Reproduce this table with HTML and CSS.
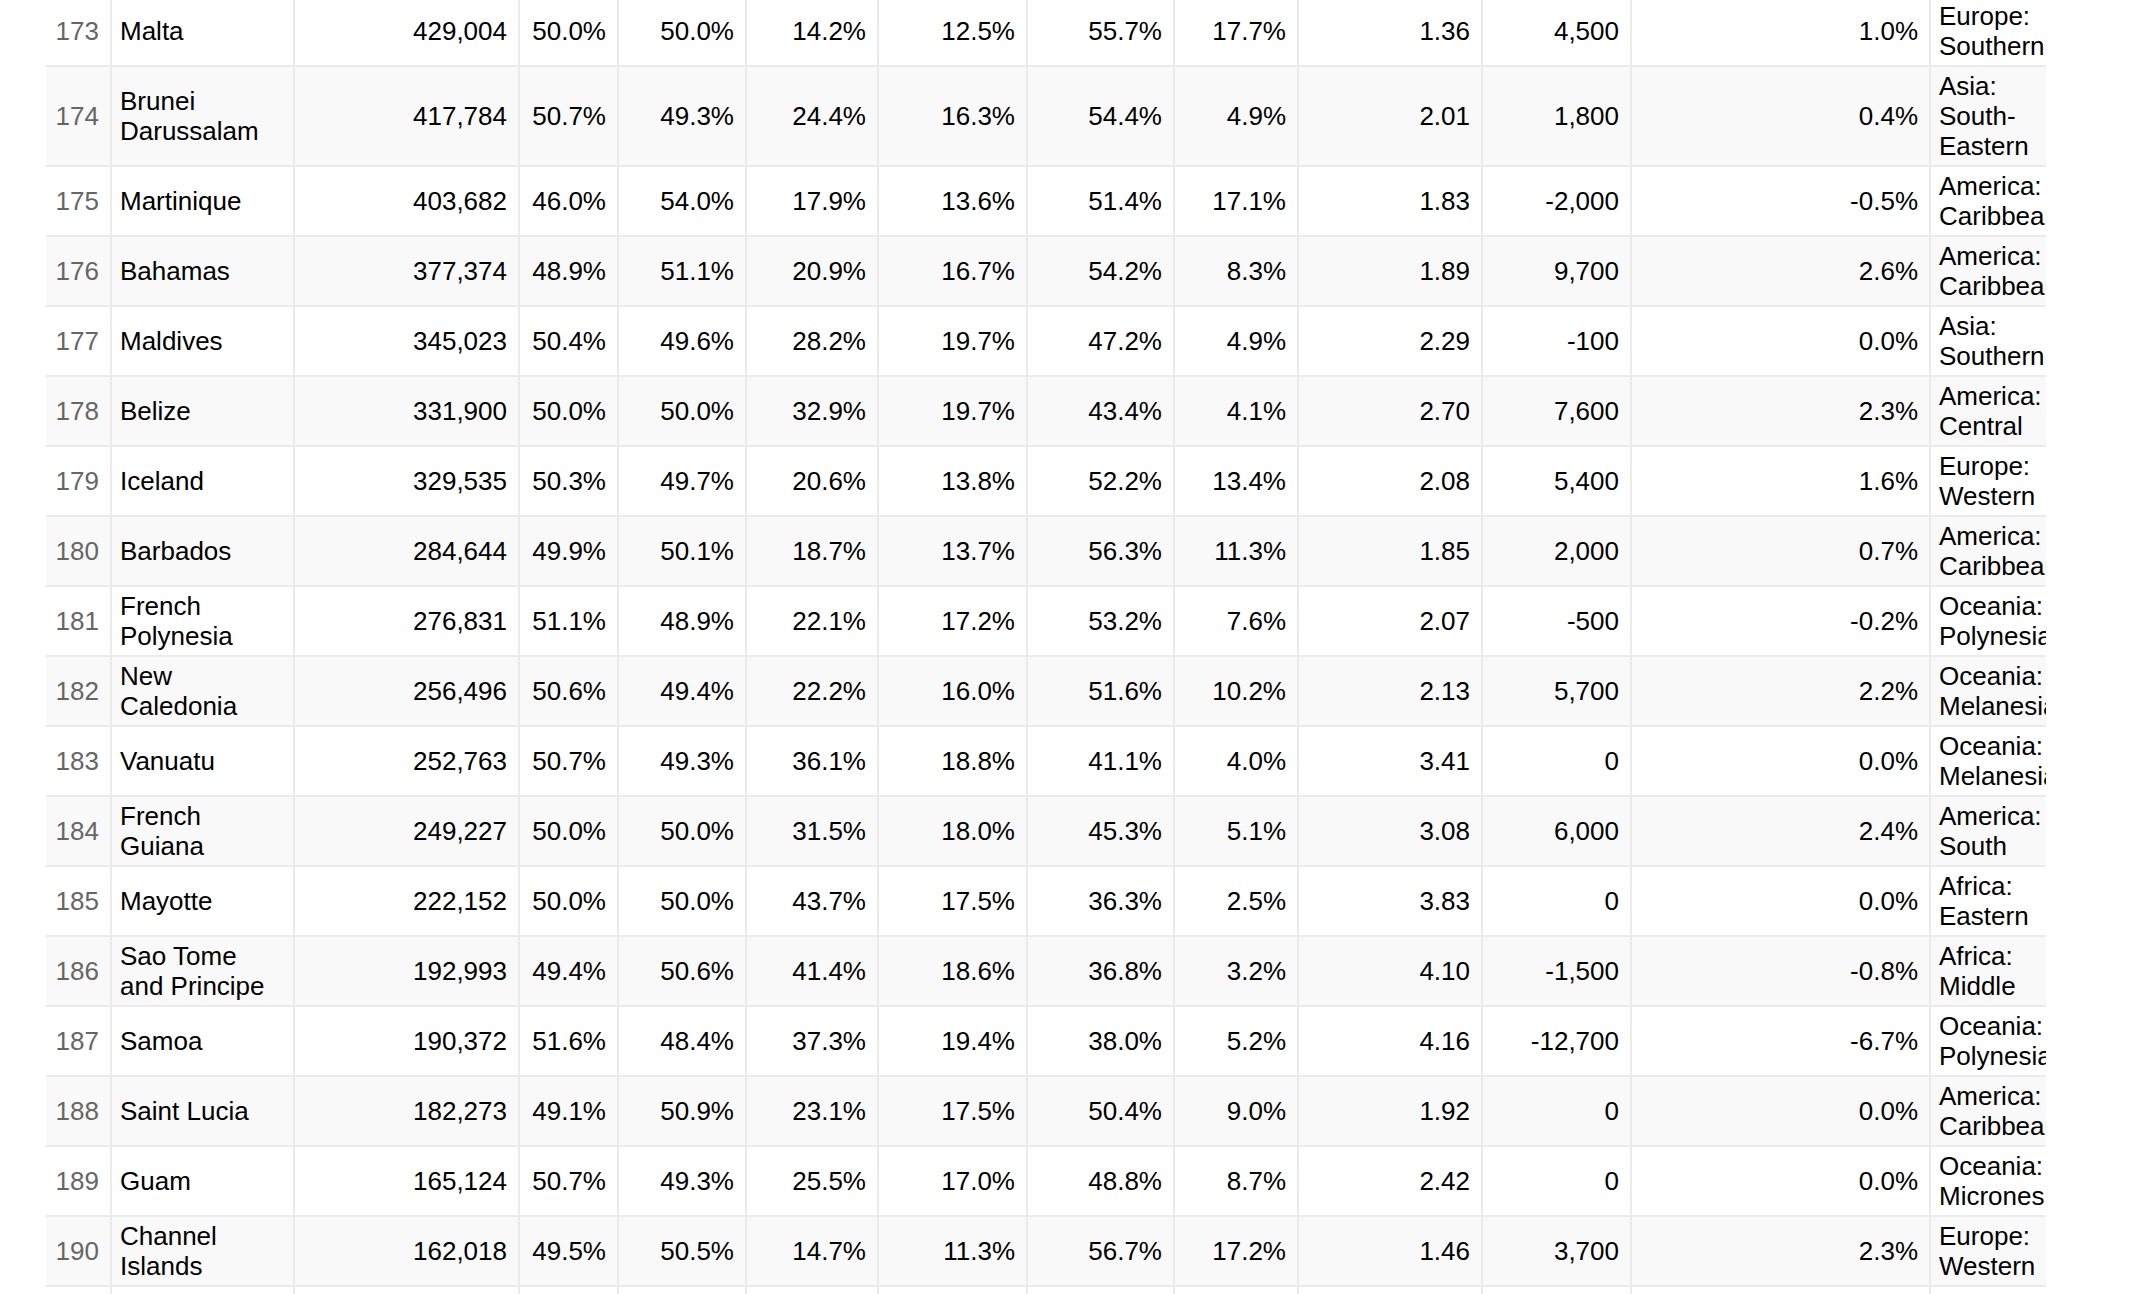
FILE: index.html
```html
<!DOCTYPE html>
<html lang="en">
<head>
<meta charset="utf-8">
<title>Population table</title>
<link rel="stylesheet" href="styles.css">
</head>
<body>
<div class="table-wrap">
<table class="pop-table">
<colgroup>
<col class="c-rank"><col class="c-country"><col class="c-pop"><col class="c-male"><col class="c-female"><col class="c-a"><col class="c-b"><col class="c-c"><col class="c-d"><col class="c-e"><col class="c-f"><col class="c-g"><col class="c-region">
</colgroup>
<tbody>
<tr><td class="rank">173</td><td class="name">Malta</td><td>429,004</td><td>50.0%</td><td>50.0%</td><td>14.2%</td><td>12.5%</td><td>55.7%</td><td>17.7%</td><td>1.36</td><td>4,500</td><td>1.0%</td><td class="region">Europe: Southern</td></tr>
<tr><td class="rank">174</td><td class="name">Brunei Darussalam</td><td>417,784</td><td>50.7%</td><td>49.3%</td><td>24.4%</td><td>16.3%</td><td>54.4%</td><td>4.9%</td><td>2.01</td><td>1,800</td><td>0.4%</td><td class="region">Asia: South-Eastern</td></tr>
<tr><td class="rank">175</td><td class="name">Martinique</td><td>403,682</td><td>46.0%</td><td>54.0%</td><td>17.9%</td><td>13.6%</td><td>51.4%</td><td>17.1%</td><td>1.83</td><td>-2,000</td><td>-0.5%</td><td class="region">America: Caribbean</td></tr>
<tr><td class="rank">176</td><td class="name">Bahamas</td><td>377,374</td><td>48.9%</td><td>51.1%</td><td>20.9%</td><td>16.7%</td><td>54.2%</td><td>8.3%</td><td>1.89</td><td>9,700</td><td>2.6%</td><td class="region">America: Caribbean</td></tr>
<tr><td class="rank">177</td><td class="name">Maldives</td><td>345,023</td><td>50.4%</td><td>49.6%</td><td>28.2%</td><td>19.7%</td><td>47.2%</td><td>4.9%</td><td>2.29</td><td>-100</td><td>0.0%</td><td class="region">Asia: Southern</td></tr>
<tr><td class="rank">178</td><td class="name">Belize</td><td>331,900</td><td>50.0%</td><td>50.0%</td><td>32.9%</td><td>19.7%</td><td>43.4%</td><td>4.1%</td><td>2.70</td><td>7,600</td><td>2.3%</td><td class="region">America: Central</td></tr>
<tr><td class="rank">179</td><td class="name">Iceland</td><td>329,535</td><td>50.3%</td><td>49.7%</td><td>20.6%</td><td>13.8%</td><td>52.2%</td><td>13.4%</td><td>2.08</td><td>5,400</td><td>1.6%</td><td class="region">Europe: Western</td></tr>
<tr><td class="rank">180</td><td class="name">Barbados</td><td>284,644</td><td>49.9%</td><td>50.1%</td><td>18.7%</td><td>13.7%</td><td>56.3%</td><td>11.3%</td><td>1.85</td><td>2,000</td><td>0.7%</td><td class="region">America: Caribbean</td></tr>
<tr><td class="rank">181</td><td class="name">French Polynesia</td><td>276,831</td><td>51.1%</td><td>48.9%</td><td>22.1%</td><td>17.2%</td><td>53.2%</td><td>7.6%</td><td>2.07</td><td>-500</td><td>-0.2%</td><td class="region">Oceania: Polynesia</td></tr>
<tr><td class="rank">182</td><td class="name">New Caledonia</td><td>256,496</td><td>50.6%</td><td>49.4%</td><td>22.2%</td><td>16.0%</td><td>51.6%</td><td>10.2%</td><td>2.13</td><td>5,700</td><td>2.2%</td><td class="region">Oceania: Melanesia</td></tr>
<tr><td class="rank">183</td><td class="name">Vanuatu</td><td>252,763</td><td>50.7%</td><td>49.3%</td><td>36.1%</td><td>18.8%</td><td>41.1%</td><td>4.0%</td><td>3.41</td><td>0</td><td>0.0%</td><td class="region">Oceania: Melanesia</td></tr>
<tr><td class="rank">184</td><td class="name">French Guiana</td><td>249,227</td><td>50.0%</td><td>50.0%</td><td>31.5%</td><td>18.0%</td><td>45.3%</td><td>5.1%</td><td>3.08</td><td>6,000</td><td>2.4%</td><td class="region">America: South</td></tr>
<tr><td class="rank">185</td><td class="name">Mayotte</td><td>222,152</td><td>50.0%</td><td>50.0%</td><td>43.7%</td><td>17.5%</td><td>36.3%</td><td>2.5%</td><td>3.83</td><td>0</td><td>0.0%</td><td class="region">Africa: Eastern</td></tr>
<tr><td class="rank">186</td><td class="name">Sao Tome and Principe</td><td>192,993</td><td>49.4%</td><td>50.6%</td><td>41.4%</td><td>18.6%</td><td>36.8%</td><td>3.2%</td><td>4.10</td><td>-1,500</td><td>-0.8%</td><td class="region">Africa: Middle</td></tr>
<tr><td class="rank">187</td><td class="name">Samoa</td><td>190,372</td><td>51.6%</td><td>48.4%</td><td>37.3%</td><td>19.4%</td><td>38.0%</td><td>5.2%</td><td>4.16</td><td>-12,700</td><td>-6.7%</td><td class="region">Oceania: Polynesia</td></tr>
<tr><td class="rank">188</td><td class="name">Saint Lucia</td><td>182,273</td><td>49.1%</td><td>50.9%</td><td>23.1%</td><td>17.5%</td><td>50.4%</td><td>9.0%</td><td>1.92</td><td>0</td><td>0.0%</td><td class="region">America: Caribbean</td></tr>
<tr><td class="rank">189</td><td class="name">Guam</td><td>165,124</td><td>50.7%</td><td>49.3%</td><td>25.5%</td><td>17.0%</td><td>48.8%</td><td>8.7%</td><td>2.42</td><td>0</td><td>0.0%</td><td class="region">Oceania: Micronesia</td></tr>
<tr><td class="rank">190</td><td class="name">Channel Islands</td><td>162,018</td><td>49.5%</td><td>50.5%</td><td>14.7%</td><td>11.3%</td><td>56.7%</td><td>17.2%</td><td>1.46</td><td>3,700</td><td>2.3%</td><td class="region">Europe: Western</td></tr>
<tr><td class="rank">191</td><td class="name">Curaçao</td><td>157,538</td><td>46.2%</td><td>53.8%</td><td>18.7%</td><td>13.4%</td><td>52.5%</td><td>15.4%</td><td>1.76</td><td>500</td><td>0.3%</td><td class="region">America: Caribbean</td></tr>
</tbody>
</table>
</div>
</body>
</html>
```

FILE: styles.css
```css
html, body {
  margin: 0;
  padding: 0;
  background: #ffffff;
}

body {
  font-family: "Liberation Sans", Arial, Helvetica, sans-serif;
  font-size: 26px;
  line-height: 30px;
  color: #000000;
  overflow: hidden;
}

.table-wrap {
  margin: -3px 0 0 46px;
  width: 2000px;
  overflow: hidden;
}

.pop-table {
  table-layout: fixed;
  border-collapse: separate;
  border-spacing: 0;
  width: 2040px;
}

.c-rank { width: 66px; }
.c-country { width: 183px; }
.c-pop { width: 225px; }
.c-male { width: 99px; }
.c-female { width: 128px; }
.c-a { width: 132px; }
.c-b { width: 149px; }
.c-c { width: 147px; }
.c-d { width: 124px; }
.c-e { width: 184px; }
.c-f { width: 149px; }
.c-g { width: 299px; }
.c-region { width: 155px; }

.pop-table td {
  box-sizing: border-box;
  padding: 4px 11px 4px 8px;
  text-align: right;
  vertical-align: middle;
  border-right: 2px solid #ebebeb;
  border-bottom: 2px solid #ebebeb;
  white-space: normal;
}

.pop-table tr:nth-child(even) td {
  background: #f9f9f9;
}

.pop-table td.rank {
  color: #666666;
  text-align: right;
}

.pop-table td.name,
.pop-table td.region {
  text-align: left;
}

.pop-table td.region {
  border-right: none;
}
```
